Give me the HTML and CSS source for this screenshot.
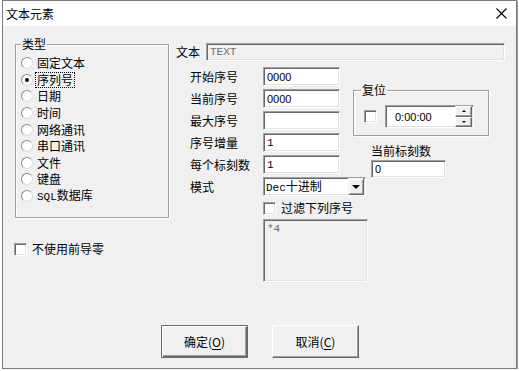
FILE: index.html
```html
<!DOCTYPE html>
<html lang="zh">
<head>
<meta charset="utf-8">
<title>文本元素</title>
<link rel="stylesheet" href="styles.css">
</head>
<body>
<div class="window">
  <div class="titlebar">
    <span class="title">文本元素</span>
    <svg class="close" viewBox="0 0 11 11"><path d="M0.5 0.5L10.5 10.5M10.5 0.5L0.5 10.5" stroke="#000" stroke-width="1.1" fill="none"/></svg>
  </div>
  <div class="content">
    <div class="main">
      <div class="left-col">
        <fieldset class="group type-group">
          <legend>类型</legend>
          <div class="radio-row"><span class="radio"></span><span>固定文本</span></div>
          <div class="radio-row"><span class="radio on"></span><span class="focus">序列号</span></div>
          <div class="radio-row"><span class="radio"></span><span>日期</span></div>
          <div class="radio-row"><span class="radio"></span><span>时间</span></div>
          <div class="radio-row"><span class="radio"></span><span>网络通讯</span></div>
          <div class="radio-row"><span class="radio"></span><span>串口通讯</span></div>
          <div class="radio-row"><span class="radio"></span><span>文件</span></div>
          <div class="radio-row"><span class="radio"></span><span>键盘</span></div>
          <div class="radio-row"><span class="radio"></span><span><span class="mono">SQL</span>数据库</span></div>
        </fieldset>
        <div class="check-row leading"><span class="checkbox"></span><span>不使用前导零</span></div>
      </div>
      <div class="right-area">
        <div class="text-row">
          <span class="text-label">文本</span>
          <div class="field disabled text-field mono">TEXT</div>
        </div>
        <div class="lower">
          <div class="fields-col">
            <div class="frow"><span class="flabel">开始序号</span><div class="field sans">0000</div></div>
            <div class="frow"><span class="flabel">当前序号</span><div class="field sans">0000</div></div>
            <div class="frow"><span class="flabel">最大序号</span><div class="field sans"></div></div>
            <div class="frow"><span class="flabel">序号增量</span><div class="field mono">1</div></div>
            <div class="frow"><span class="flabel">每个标刻数</span><div class="field mono">1</div></div>
            <div class="frow"><span class="flabel">模式</span>
              <div class="field combo"><span class="combo-text"><span class="mono">Dec</span>十进制</span><span class="combo-btn"></span></div>
            </div>
            <div class="filter">
              <div class="check-row"><span class="checkbox"></span><span>过滤下列序号</span></div>
              <div class="field disabled textarea mono">*4</div>
            </div>
          </div>
          <div class="side-col">
            <fieldset class="group reset-group">
              <legend>复位</legend>
              <div class="reset-row">
                <span class="checkbox"></span>
                <div class="field time sans">
                  <span>0:00:00</span>
                  <div class="spin"><span class="up"></span><span class="down"></span></div>
                </div>
              </div>
            </fieldset>
            <div class="count-label">当前标刻数</div>
            <div class="field sans count">0</div>
          </div>
        </div>
      </div>
    </div>
    <div class="buttons">
      <div class="btn default">确定(<u>O</u>)</div>
      <div class="btn">取消(<u>C</u>)</div>
    </div>
  </div>
</div>
</body>
</html>
```
FILE: styles.css
```css
body {
  margin: 0;
  background: #fff;
  font-family: "Noto Sans CJK SC", sans-serif;
  font-size: 12px;
  color: #000;
}

.window {
  box-sizing: border-box;
  width: 515px;
  height: 369px;
  margin-left: 2px;
  border: 1px solid #7a7a7a;
  box-shadow: 1px 1px 0 #9a9a9a;
  background: #f0f0f0;
  display: flex;
  flex-direction: column;
}

.titlebar {
  flex: none;
  height: 25px;
  background: #fff;
  display: flex;
  align-items: center;
  justify-content: space-between;
  padding: 0 9px 0 3px;
}

.title { line-height: 16px; }

.close { width: 11px; height: 11px; display: block; }

.content {
  flex: 1;
  display: flex;
  flex-direction: column;
}

.main {
  flex: 1;
  display: flex;
  align-items: flex-start;
}

.mono { font-family: "Liberation Mono", monospace; font-size: 11px; }
.sans { font-family: "Liberation Sans", sans-serif; font-size: 11px; }

/* group boxes */
.group {
  margin: 0;
  padding: 0;
  min-width: 0;
  box-sizing: border-box;
  border: 1px solid #a0a0a0;
  box-shadow: 1px 1px 0 #fff, inset 1px 1px 0 #fff;
}

.group legend {
  padding: 0 1px;
  line-height: 16px;
  font-size: 12px;
  background: #f0f0f0;
}

.left-col {
  flex: none;
  width: 154px;
  margin: 10px 0 0 12px;
}

.type-group {
  width: 154px;
  height: 182px;
  padding-top: 3px;
}

.type-group legend { margin-left: 5px; }

.radio-row {
  display: flex;
  align-items: center;
  height: 16.6px;
  margin-left: 5px;
  line-height: 14px;
  white-space: nowrap;
}

.radio {
  flex: none;
  box-sizing: border-box;
  width: 12px;
  height: 12px;
  margin-right: 4px;
  border-radius: 50%;
  background: #fff;
  border: 1px solid;
  border-color: #8c8c8c #dcdcdc #dcdcdc #8c8c8c;
  display: flex;
  align-items: center;
  justify-content: center;
}

.radio.on::after {
  content: "";
  width: 4px;
  height: 4px;
  border-radius: 50%;
  background: #000;
}

.focus {
  outline: 1px dotted #000;
  outline-offset: 0;
  padding: 0 1px;
  margin-left: -1px;
}

/* checkbox */
.check-row {
  display: flex;
  align-items: center;
  height: 16px;
  gap: 5px;
  line-height: 16px;
  white-space: nowrap;
}

.checkbox {
  flex: none;
  box-sizing: border-box;
  width: 13px;
  height: 13px;
  background: #fff;
  border: 1px solid;
  border-color: #a0a0a0 #fff #fff #a0a0a0;
  box-shadow: inset 1px 1px 0 #696969, inset -1px -1px 0 #e3e3e3;
}

.leading { margin: 23px 0 0 -1px; }

/* sunken fields */
.field {
  box-sizing: border-box;
  flex: none;
  background: #fff;
  border: 1px solid;
  border-color: #a0a0a0 #fff #fff #a0a0a0;
  box-shadow: inset 1px 1px 0 #696969, inset -1px -1px 0 #e3e3e3;
  display: flex;
  align-items: center;
  padding-left: 3px;
  white-space: nowrap;
}

.field.disabled {
  background: #f0f0f0;
  color: #6d6d6d;
}

.right-area {
  flex: none;
  margin-left: 7px;
  padding-top: 17px;
}

.text-row {
  display: flex;
  align-items: center;
  height: 18px;
}

.text-label { width: 30px; line-height: 16px; }

.text-field { width: 299px; height: 18px; }

.lower {
  display: flex;
  align-items: flex-start;
  margin-top: 6px;
}

.fields-col {
  flex: none;
  box-sizing: border-box;
  width: 164px;
  padding-left: 14px;
}

.frow {
  display: flex;
  align-items: center;
  height: 19px;
  white-space: nowrap;
}

.frow + .frow { margin-top: 3px; }

.flabel { flex: none; width: 73px; line-height: 16px; }

.frow .field { width: 77px; height: 19px; }

.frow .combo {
  width: 103px;
  justify-content: space-between;
  padding: 0 1px 0 2px;
}

.combo-text { line-height: 16px; }

.combo-btn {
  box-sizing: border-box;
  width: 16px;
  height: 17px;
  background: #f0f0f0;
  border: 1px solid;
  border-color: #f0f0f0 #696969 #696969 #f0f0f0;
  box-shadow: inset 1px 1px 0 #fff, inset -1px -1px 0 #a0a0a0;
  display: flex;
  align-items: center;
  justify-content: center;
}

.combo-btn::after {
  content: "";
  border-left: 4px solid transparent;
  border-right: 4px solid transparent;
  border-top: 4px solid #000;
}

.filter {
  margin: 4px 0 0 73px;
  width: 105px;
}

.textarea {
  width: 105px;
  height: 63px;
  margin-top: 3px;
  align-items: flex-start;
  padding: 3px 0 0 3px;
  line-height: 12px;
}

.side-col {
  flex: none;
  width: 136px;
  margin: 15px 0 0 13px;
}

.reset-group {
  width: 136px;
  padding: 7px 0 7px 0;
}

.reset-group legend { margin-left: 7px; }

.reset-row {
  display: flex;
  align-items: center;
  gap: 8px;
  height: 23px;
  margin-left: 10px;
}

.time {
  width: 89px;
  height: 23px;
  padding: 0 1px 0 9px;
  justify-content: space-between;
}

.spin {
  width: 17px;
  height: 21px;
  display: flex;
  flex-direction: column;
}

.spin span {
  flex: 1;
  box-sizing: border-box;
  background: #f0f0f0;
  border: 1px solid;
  border-color: #fff #696969 #696969 #fff;
  box-shadow: inset -1px -1px 0 #a0a0a0;
  display: flex;
  align-items: center;
  justify-content: center;
}

.spin .up::after {
  content: "";
  border-left: 2px solid transparent;
  border-right: 2px solid transparent;
  border-bottom: 2px solid #000;
}

.spin .down::after {
  content: "";
  border-left: 2px solid transparent;
  border-right: 2px solid transparent;
  border-top: 2px solid #000;
}

.count-label {
  margin: 7px 0 0 18px;
  line-height: 16px;
  white-space: nowrap;
}

.count {
  width: 75px;
  height: 18px;
  margin: 1px 0 0 18px;
}

/* buttons */
.buttons {
  flex: none;
  display: flex;
  gap: 24px;
  padding: 0 0 10px 158px;
}

.btn {
  box-sizing: border-box;
  width: 87px;
  height: 33px;
  display: flex;
  align-items: center;
  justify-content: center;
  background: #f0f0f0;
  border: 1px solid;
  border-color: #fff #696969 #696969 #fff;
  box-shadow: inset -1px -1px 0 #a0a0a0;
  line-height: 16px;
}

.btn.default {
  border-color: #696969;
  box-shadow: inset 1px 1px 0 #fff, inset -1px -1px 0 #696969, inset -2px -2px 0 #a0a0a0;
}

.btn u { text-underline-offset: 2px; }
```
